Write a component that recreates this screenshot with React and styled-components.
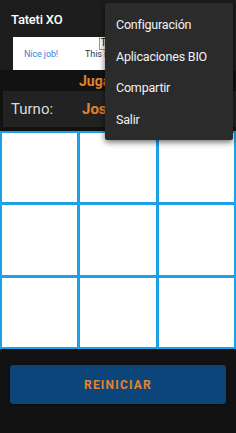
import React from "react";
import styled, { createGlobalStyle } from "styled-components";

const menuItems = ["Configuración", "Aplicaciones BIO", "Compartir", "Salir"];

const App = () => {
  const cells = Array.from({ length: 9 }, (_, i) => i);

  return (
    <Screen>
      <GlobalStyle />
      <AppBar>
        <Title>Tateti XO</Title>
        <Banner>
          <AdLink>Nice job!</AdLink>
          <AdText>This is a test ad</AdText>
          <AdBadge>T</AdBadge>
        </Banner>
      </AppBar>
      <Status>Jugador: Jose</Status>
      <TurnBox>
        <TurnLabel>Turno:</TurnLabel>
        <TurnName>Jose</TurnName>
      </TurnBox>
      <Board>
        {cells.map((c) => (
          <Cell key={c} />
        ))}
      </Board>
      <Footer>
        <ResetButton>REINICIAR</ResetButton>
      </Footer>
      <Menu>
        {menuItems.map((item) => (
          <MenuItem key={item}>{item}</MenuItem>
        ))}
      </Menu>
    </Screen>
  );
};

export default App;

const GlobalStyle = createGlobalStyle`
  body {
    margin: 0;
    background: #121212;
    font-family: Roboto, "Liberation Sans", sans-serif;
  }
`;

const Screen = styled.div`
  position: relative;
  width: 236px;
  height: 433px;
  display: flex;
  flex-direction: column;
  background: #121212;
  overflow: hidden;
`;

const AppBar = styled.div`
  background: #1d1d1d;
  padding: 0 0 0 13px;
  height: 70px;
  box-sizing: border-box;
`;

const Title = styled.div`
  height: 37px;
  display: flex;
  align-items: center;
  margin-left: -2px;
  padding-top: 2px;
  box-sizing: border-box;
  color: #fff;
  font-size: 13px;
  font-weight: 500;
  letter-spacing: -0.2px;
`;

const Banner = styled.div`
  position: relative;
  display: flex;
  align-items: center;
  gap: 27px;
  width: 150px;
  height: 33px;
  padding-left: 11px;
  box-sizing: border-box;
  background: #fff;
  font-size: 9px;
  letter-spacing: -0.1px;
  white-space: nowrap;
  overflow: hidden;
`;

const AdLink = styled.span`
  color: #3d7fd6;
`;

const AdText = styled.span`
  color: #333;
`;

const AdBadge = styled.span`
  position: absolute;
  left: 86px;
  top: 0;
  width: 7px;
  height: 12px;
  border: 1px solid #999;
  border-top: none;
  background: #fff;
  color: #222;
  font-size: 10px;
  line-height: 12px;
  text-align: center;
`;

const Status = styled.div`
  height: 21px;
  display: flex;
  align-items: center;
  padding-left: 79px;
  color: #e5822c;
  font-size: 14px;
  font-weight: 700;
`;

const TurnBox = styled.div`
  display: flex;
  align-items: center;
  height: 36px;
  margin: 0 0 4px 3px;
  padding-left: 8px;
  background: #222;
  font-size: 15px;
`;

const TurnLabel = styled.span`
  width: 71px;
  color: #dcdcdc;
`;

const TurnName = styled.span`
  color: #e5822c;
  font-weight: 700;
`;

const Board = styled.div`
  display: grid;
  grid-template-columns: repeat(3, 1fr);
  grid-template-rows: repeat(3, 1fr);
  gap: 3px;
  padding: 2px;
  height: 218px;
  box-sizing: border-box;
  background: #1ea0e8;
`;

const Cell = styled.div`
  background: #fff;
`;

const Footer = styled.div`
  flex: 1;
  padding: 16px 10px 0;
`;

const ResetButton = styled.button`
  display: block;
  width: 100%;
  height: 39px;
  border: none;
  border-radius: 3px;
  background: #0c4579;
  color: #e5822c;
  font-family: Roboto, "Liberation Sans", sans-serif;
  font-size: 12px;
  font-weight: 700;
  letter-spacing: 1.2px;
  box-shadow: 0 1px 2px rgba(0, 0, 0, 0.5);
`;

const Menu = styled.div`
  position: absolute;
  top: 3px;
  left: 105px;
  width: 128px;
  padding: 6px 0 5px;
  background: #2b2b2b;
  border-radius: 2px;
  box-shadow: 0 2px 6px rgba(0, 0, 0, 0.6);
`;

const MenuItem = styled.div`
  height: 31.5px;
  display: flex;
  align-items: center;
  padding-left: 11px;
  color: #f2f2f2;
  font-size: 12.5px;
  letter-spacing: -0.2px;
`;
